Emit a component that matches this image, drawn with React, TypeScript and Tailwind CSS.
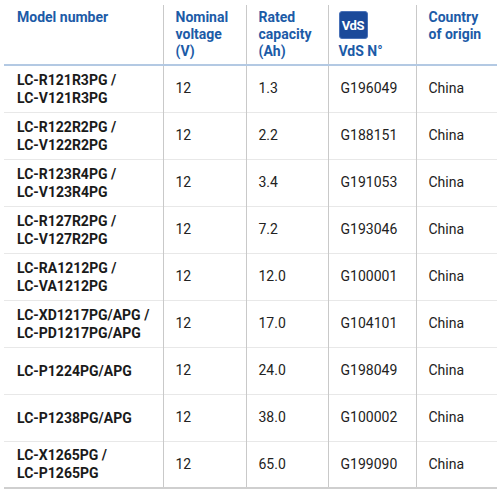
const rows = [
  { model: ["LC-R121R3PG /", "LC-V121R3PG"], volt: "12", cap: "1.3", vds: "G196049", country: "China" },
  { model: ["LC-R122R2PG /", "LC-V122R2PG"], volt: "12", cap: "2.2", vds: "G188151", country: "China" },
  { model: ["LC-R123R4PG /", "LC-V123R4PG"], volt: "12", cap: "3.4", vds: "G191053", country: "China" },
  { model: ["LC-R127R2PG /", "LC-V127R2PG"], volt: "12", cap: "7.2", vds: "G193046", country: "China" },
  { model: ["LC-RA1212PG /", "LC-VA1212PG"], volt: "12", cap: "12.0", vds: "G100001", country: "China" },
  { model: ["LC-XD1217PG/APG /", "LC-PD1217PG/APG"], volt: "12", cap: "17.0", vds: "G104101", country: "China" },
  { model: ["LC-P1224PG/APG"], volt: "12", cap: "24.0", vds: "G198049", country: "China" },
  { model: ["LC-P1238PG/APG"], volt: "12", cap: "38.0", vds: "G100002", country: "China" },
  { model: ["LC-X1265PG /", "LC-P1265PG"], volt: "12", cap: "65.0", vds: "G199090", country: "China" },
];

function VdsLogo() {
  return (
    <div className="flex h-[28px] w-[29px] items-center justify-center rounded-[3px] border border-[#4a72b8] bg-[#1b4a9a] text-[13px] font-bold leading-none tracking-[-0.3px] text-white">
      VdS
    </div>
  );
}

export default function App() {
  const th = "border-l border-[#c9c9c9] px-[12px] pt-[4px] align-top text-left font-bold text-[#1c5ba7] leading-[17px]";
  const td = "border-l border-[#c9c9c9] px-[12px] align-middle text-[#222]";

  return (
    <div className="min-h-screen bg-white pt-[5px] pl-[4px]" style={{ fontFamily: "Roboto, 'Liberation Sans', sans-serif" }}>
      <table className="w-[493px] table-fixed border-collapse text-[14px]">
        <colgroup>
          <col className="w-[159px]" />
          <col className="w-[83px]" />
          <col className="w-[82px]" />
          <col className="w-[88px]" />
          <col className="w-[81px]" />
        </colgroup>
        <thead>
          <tr className="h-[60px] border-b-2 border-[#b3c9e3]">
            <th className="px-[13px] pt-[4px] align-top text-left font-bold text-[#1c5ba7] leading-[17px]">Model number</th>
            <th className={th}>Nominal<br />voltage<br />(V)</th>
            <th className={th}>Rated<br />capacity<br />(Ah)</th>
            <th className="border-l border-[#c9c9c9] px-[10px] pt-[6px] align-top text-left font-bold text-[#1c5ba7] leading-[17px]">
              <VdsLogo />
              <div className="mt-[4px]">VdS N°</div>
            </th>
            <th className={th}>Country<br />of origin</th>
          </tr>
        </thead>
        <tbody>
          {rows.map((r, i) => (
            <tr
              key={r.vds}
              className={
                i === rows.length - 1
                  ? "h-[47px] border-b-2 border-[#cfcfcf]"
                  : "h-[47px] border-b border-[#e8e8e8]"
              }
            >
              <td className="px-[13px] align-middle font-bold leading-[18px] text-[#1a1a1a]">
                {r.model.map((m) => (
                  <div key={m}>{m}</div>
                ))}
              </td>
              <td className={td}>{r.volt}</td>
              <td className={td}>{r.cap}</td>
              <td className={td}>{r.vds}</td>
              <td className={td}>{r.country}</td>
            </tr>
          ))}
        </tbody>
      </table>
    </div>
  );
}
